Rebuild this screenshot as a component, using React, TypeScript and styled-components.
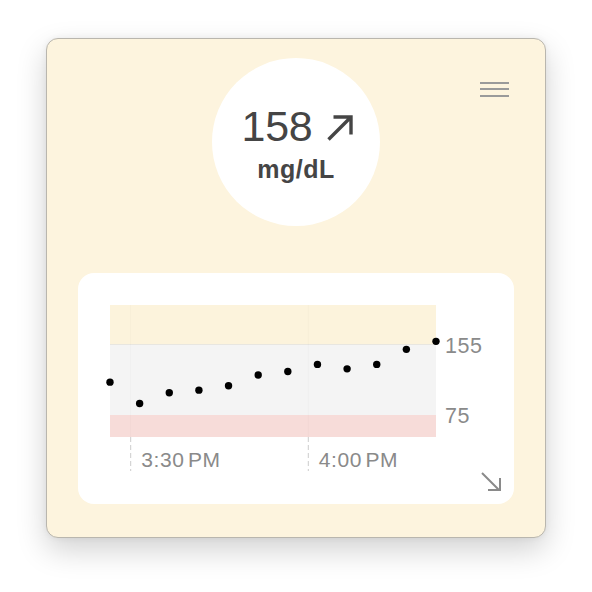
import styled, { createGlobalStyle } from 'styled-components'

const GlobalStyle = createGlobalStyle`
  html, body {
    margin: 0;
    padding: 0;
    background: #ffffff;
    font-family: 'Liberation Sans', Arial, sans-serif;
  }
`

// glucose readings every 5 minutes, mg/dL
const readings = [112, 88, 100, 103, 108, 120, 124, 132, 127, 132, 149, 158]

const PLOT_W = 326
const PLOT_H = 132
const HIGH = 155
const LOW = 75
const PX_PER_UNIT = 71 / (HIGH - LOW)
const yFor = (v: number) => 39 + (HIGH - v) * PX_PER_UNIT
const xFor = (i: number) => (i * PLOT_W) / (readings.length - 1)

const ticks = [
  { x: 20.7, label: '3:30 PM' },
  { x: 198.3, label: '4:00 PM' },
]

export default function App() {
  return (
    <Stage>
      <GlobalStyle />
      <Window>
        <Header>
          <span />
          <Reading>
            <ValueRow>
              <Value>158</Value>
              <TrendArrow width="26" height="26" viewBox="0 0 26 26">
                <path d="M1.5 24.5 L24 2 M6.5 2 H24 V19.5" />
              </TrendArrow>
            </ValueRow>
            <Unit>mg/dL</Unit>
          </Reading>
          <MenuButton aria-label="menu">
            <MenuLine />
            <MenuLine />
            <MenuLine />
          </MenuButton>
        </Header>

        <ChartCard>
          <ChartSvg width="380" height="166" viewBox="0 0 380 166">
            <rect x="0" y="0" width={PLOT_W} height="39" fill="#fcf3dc" />
            <rect x="0" y="39" width={PLOT_W} height="71" fill="#f4f4f4" />
            <rect x="0" y="110" width={PLOT_W} height="22" fill="#f7dcd9" />
            <line x1="0" y1="39.5" x2={PLOT_W} y2="39.5" stroke="#e8e6e0" strokeWidth="1" />
            {ticks.map(t => (
              <g key={t.label}>
                <line x1={t.x} y1="0" x2={t.x} y2={PLOT_H} stroke="rgba(0,0,0,0.02)" strokeWidth="1" />
                <line
                  x1={t.x}
                  y1={PLOT_H}
                  x2={t.x}
                  y2="166"
                  stroke="#cccccc"
                  strokeWidth="1"
                  strokeDasharray="5 3"
                />
                <AxisText x={t.x + 10.5} y="161.5" $size={21}>
                  {t.label}
                </AxisText>
              </g>
            ))}
            <AxisText x="335" y="48" $size={21.5}>
              155
            </AxisText>
            <AxisText x="335" y="118" $size={21.5}>
              75
            </AxisText>
            {readings.map((v, i) => (
              <circle key={i} cx={xFor(i)} cy={yFor(v)} r="3.7" fill="#000" />
            ))}
          </ChartSvg>
          <CardFooter>
            <ExpandIcon width="22" height="22" viewBox="0 0 22 22">
              <path d="M2 2 L19 19 M8 19 H20 V7" />
            </ExpandIcon>
          </CardFooter>
        </ChartCard>
      </Window>
    </Stage>
  )
}

const Stage = styled.div`
  width: 592px;
  height: 592px;
  box-sizing: border-box;
  padding: 38px 0 0 46px;
`
const Window = styled.div`
  box-sizing: border-box;
  width: 500px;
  height: 500px;
  background: #fdf4de;
  border: 1px solid #b9b6ae;
  border-radius: 12px;
  box-shadow: 0 12px 30px rgba(0, 0, 0, 0.18), 0 0 6px rgba(0, 0, 0, 0.06);
  display: flex;
  flex-direction: column;
`
const Header = styled.div`
  display: grid;
  grid-template-columns: 1fr 168px 1fr;
  padding-top: 19px;
`
const Reading = styled.div`
  width: 168px;
  height: 168px;
  border-radius: 50%;
  background: #ffffff;
  display: flex;
  flex-direction: column;
  align-items: center;
  padding-top: 47px;
  box-sizing: border-box;
  color: #454545;
`
const ValueRow = styled.div`
  display: flex;
  align-items: baseline;
  gap: 14px;
  margin-left: 2px;
`
const Value = styled.span`
  font-size: 43px;
  line-height: 43px;
  letter-spacing: -0.2px;
`
const TrendArrow = styled.svg`
  margin-bottom: 4px;
  fill: none;
  stroke: #454545;
  stroke-width: 3.4;
`
const Unit = styled.span`
  margin-top: 9px;
  font-size: 25px;
  line-height: 25px;
  font-weight: 700;
  letter-spacing: 0.5px;
`
const MenuButton = styled.div`
  justify-self: end;
  margin: 24px 36px 0 0;
  width: 29px;
  display: flex;
  flex-direction: column;
  gap: 4.3px;
`
const MenuLine = styled.div`
  height: 2px;
  background: #9a9a9a;
`
const ChartCard = styled.div`
  margin: 47px 31px 0;
  height: 231px;
  box-sizing: border-box;
  background: #ffffff;
  border-radius: 16px;
  padding: 32px 0 0 32px;
  display: flex;
  flex-direction: column;
`
const ChartSvg = styled.svg`
  overflow: visible;
  display: block;
`
const AxisText = styled.text<{ $size: number }>`
  font-family: 'Liberation Sans', Arial, sans-serif;
  font-size: ${props => props.$size}px;
  fill: #8a8a8a;
  letter-spacing: 0.6px;
  word-spacing: -3px;
`
const CardFooter = styled.div`
  display: flex;
  justify-content: flex-end;
  padding-right: 12px;
`
const ExpandIcon = styled.svg`
  fill: none;
  stroke: #8a8a8a;
  stroke-width: 2;
`
